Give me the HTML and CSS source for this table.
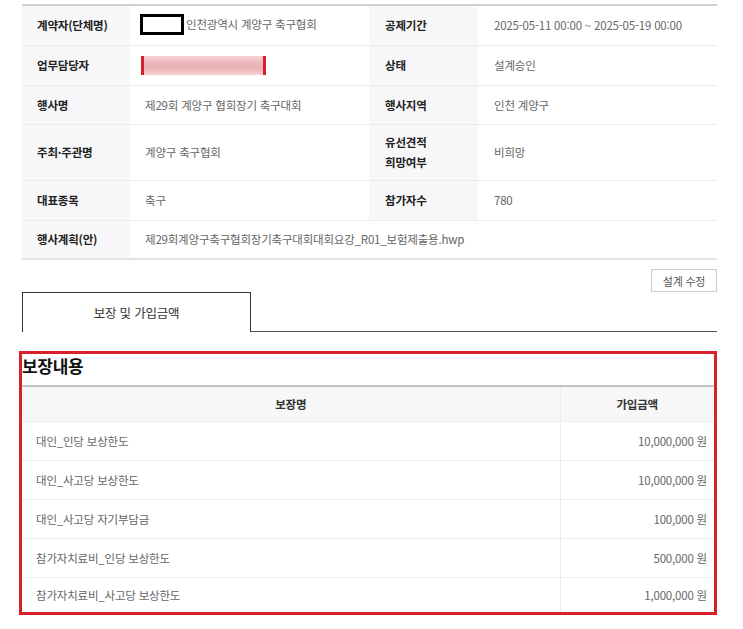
FILE: index.html
```html
<!DOCTYPE html>
<html lang="ko">
<head>
<meta charset="utf-8">
<link rel="stylesheet" href="styles.css">
</head>
<body>
<div class="page">
  <table class="info">
    <colgroup>
      <col class="c-lab1"><col class="c-val1"><col class="c-lab2"><col class="c-val2">
    </colgroup>
    <tr class="r40">
      <th>계약자(단체명)</th>
      <td><span class="mask-box"></span>인천광역시 계양구 축구협회</td>
      <th>공제기간</th>
      <td>2025-05-11 00:00 ~ 2025-05-19 00:00</td>
    </tr>
    <tr class="r40">
      <th>업무담당자</th>
      <td><span class="blur-box"></span></td>
      <th>상태</th>
      <td>설계승인</td>
    </tr>
    <tr class="r39">
      <th>행사명</th>
      <td>제29회 계양구 협회장기 축구대회</td>
      <th>행사지역</th>
      <td>인천 계양구</td>
    </tr>
    <tr class="r56">
      <th>주최·주관명</th>
      <td>계양구 축구협회</td>
      <th class="two-line">유선견적<br>희망여부</th>
      <td>비희망</td>
    </tr>
    <tr class="r40">
      <th>대표종목</th>
      <td>축구</td>
      <th>참가자수</th>
      <td>780</td>
    </tr>
    <tr class="r39 last">
      <th>행사계획(안)</th>
      <td colspan="3">제29회계양구축구협회장기축구대회대회요강_R01_보험제출용.hwp</td>
    </tr>
  </table>

  <div class="btn-row">
    <button class="btn">설계 수정</button>
  </div>

  <div class="tabs">
    <div class="tab active">보장 및 가입금액</div>
    <div class="tab-rest"></div>
  </div>

  <div class="highlight">
    <h2 class="sec-title">보장내용</h2>
    <table class="cover">
      <colgroup><col class="c-name"><col class="c-amt"></colgroup>
      <thead>
        <tr><th>보장명</th><th>가입금액</th></tr>
      </thead>
      <tbody>
        <tr><td>대인_인당 보상한도</td><td class="amt">10,000,000 원</td></tr>
        <tr><td>대인_사고당 보상한도</td><td class="amt">10,000,000 원</td></tr>
        <tr><td>대인_사고당 자기부담금</td><td class="amt">100,000 원</td></tr>
        <tr><td>참가자치료비_인당 보상한도</td><td class="amt">500,000 원</td></tr>
        <tr class="last"><td>참가자치료비_사고당 보상한도</td><td class="amt">1,000,000 원</td></tr>
      </tbody>
    </table>
  </div>
</div>
</body>
</html>
```

FILE: styles.css
```css
* { box-sizing: border-box; }
html, body { margin: 0; padding: 0; background: #fff; }
body {
  font-family: "Noto Sans CJK KR", "Noto Sans", sans-serif;
  font-size: 11.5px;
  letter-spacing: -0.2px;
  color: #666;
}
.page {
  width: 743px;
  padding: 4px 26px 0 19px;
}
.info {
  margin-left: 3px;
  width: 695px;
  border-collapse: collapse;
  table-layout: fixed;
  border-top: 2px solid #cfcfcf;
  border-bottom: 2px solid #e2e2e2;
}
.c-lab1 { width: 108px; }
.c-val1 { width: 239px; }
.c-lab2 { width: 109px; }
.c-val2 { width: 239px; }
.info th, .info td {
  border-bottom: 1px solid #ececec;
  text-align: left;
  vertical-align: middle;
  padding: 0 15px;
  white-space: nowrap;
}
.info th {
  background: #f7f7f9;
  color: #222;
  font-weight: 700;
  padding-left: 15px;
}
.info th:nth-child(3) { padding-left: 16px; }
.info td:nth-child(4) { padding-left: 16px; }
.info td { color: #666; }
.info tr.last th, .info tr.last td { border-bottom: none; }
.info .r40 { height: 40px; }
.info .r39 { height: 39px; }
.info .r56 { height: 56px; }
.info .two-line { line-height: 20px; }
.mask-box {
  display: inline-block;
  width: 44px;
  height: 21px;
  border: 3px solid #000;
  background: #fff;
  vertical-align: middle;
  margin: 0 2px 0 -5px;
  position: relative;
  top: -1px;
}
.blur-box {
  display: inline-block;
  width: 125px;
  height: 19px;
  margin-left: -4px;
  vertical-align: middle;
  border-left: 3px solid #d8202e;
  border-right: 3px solid #d8202e;
  background: linear-gradient(180deg, #f6d3d6 0%, #ecb6bb 35%, #eab2b7 65%, #f6d3d6 100%);
  filter: blur(0.6px);
}
.btn-row {
  display: flex;
  justify-content: flex-end;
  padding-top: 9px;
}
.btn {
  height: 23px;
  width: 66px;
  padding: 0;
  border: 1px solid #c9c9c9;
  background: #fff;
  font-family: inherit;
  font-size: 11px;
  letter-spacing: -0.2px;
  color: #555;
}
.tabs {
  display: flex;
  margin-left: 3px;
  width: 695px;
  height: 40px;
}
.tab {
  width: 229px;
  border: 1px solid #333;
  border-bottom: none;
  display: flex;
  align-items: center;
  justify-content: center;
  color: #333;
  font-size: 12.5px;
  padding-bottom: 1px;
}
.tab-rest {
  flex: 1;
  border-bottom: 1px solid #555;
}
.highlight {
  margin-top: 19px;
  width: 698px;
  border: 3px solid #d7212d;
}
.sec-title {
  margin: 0;
  height: 31px;
  line-height: 22px;
  font-size: 17px;
  font-weight: 700;
  color: #111;
  padding-top: 1px;
  letter-spacing: -0.3px;
}
.cover {
  width: 692px;
  border-collapse: collapse;
  table-layout: fixed;
  border-top: 2px solid #c4c4c4;
}
.c-name { width: 538px; }
.c-amt { width: 154px; }
.cover th {
  height: 35px;
  background: #f7f7f8;
  color: #333;
  font-weight: 700;
  text-align: center;
  border-bottom: 1px solid #ececec;
}
.cover th + th, .cover td + td { border-left: 1px solid #ececec; }
.cover td {
  height: 39px;
  color: #666;
  padding: 0 14px;
  border-bottom: 1px solid #ececec;
}
.cover td.amt { text-align: right; padding-right: 7px; }
.cover tr.last td { height: 35px; border-bottom: none; }
```
